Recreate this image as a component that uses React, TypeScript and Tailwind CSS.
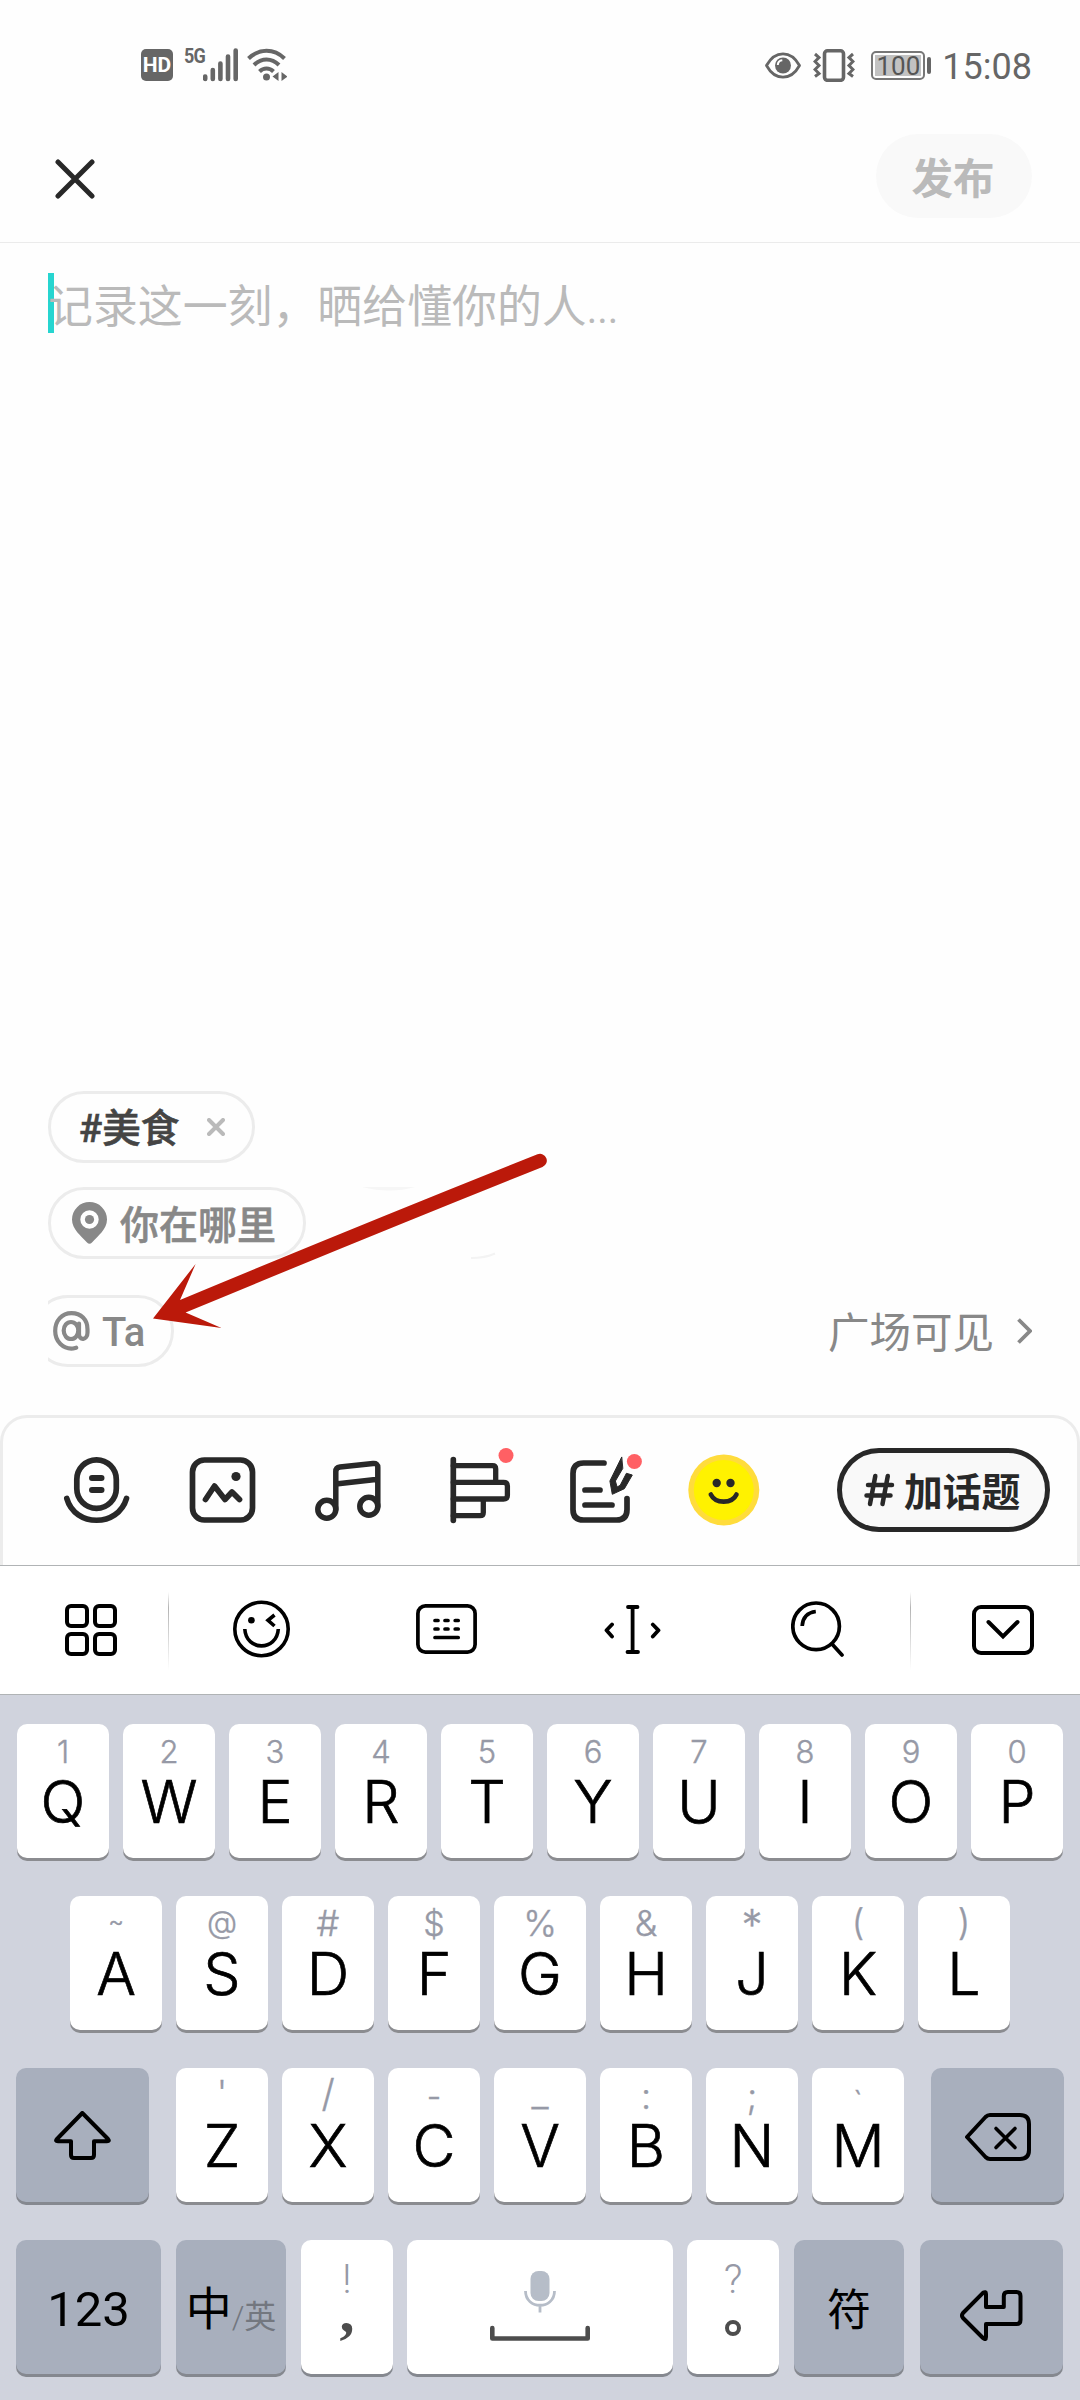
import type { ReactNode } from 'react'

const sans = "font-['Noto_Sans_CJK_SC',sans-serif]"
const roboto = "font-['Roboto','Noto_Sans_CJK_SC',sans-serif]"
const keyFont = "font-['Inter','Liberation_Sans',sans-serif]"

type KeyDef = { main: string; hint: string; hintClass?: string }

const digitRow: KeyDef[] = 'QWERTYUIOP'.split('').map((main, i) => ({
  main,
  hint: String((i + 1) % 10),
}))

const homeRow: KeyDef[] = [
  { main: 'A', hint: '~', hintClass: 'text-[24px] pt-[14px]' },
  { main: 'S', hint: '@', hintClass: 'text-[31px] pt-[10px]' },
  { main: 'D', hint: '#', hintClass: 'text-[36px] pt-[9px]' },
  { main: 'F', hint: '$', hintClass: 'text-[34px] pt-[11px]' },
  { main: 'G', hint: '%', hintClass: 'text-[36px] pt-[9px]' },
  { main: 'H', hint: '&', hintClass: 'text-[36px] pt-[9px]' },
  { main: 'J', hint: '*', hintClass: 'text-[42px] pt-[8px]' },
  { main: 'K', hint: '(', hintClass: 'text-[36px] pt-[8px]' },
  { main: 'L', hint: ')', hintClass: 'text-[36px] pt-[8px]' },
]

const bottomRow: KeyDef[] = [
  { main: 'Z', hint: "'", hintClass: 'text-[34px] pt-[8px]' },
  { main: 'X', hint: '/', hintClass: 'text-[38px] pt-[6px]' },
  { main: 'C', hint: '-', hintClass: 'text-[32px] pt-[13px]' },
  { main: 'V', hint: '_', hintClass: 'text-[38px] pt-[6px]' },
  { main: 'B', hint: ':', hintClass: 'text-[36px] pt-[10px]' },
  { main: 'N', hint: ';', hintClass: 'text-[36px] pt-[10px]' },
  { main: 'M', hint: '`', hintClass: 'text-[30px] pt-[19px]' },
]

function LetterKey({ main, hint, hintClass = 'text-[31px] pt-[12px]' }: KeyDef) {
  return (
    <div
      className={`flex h-[134px] w-[92px] shrink-0 flex-col items-center rounded-[10px] bg-white shadow-[0_3px_0_#8b8c90] ${keyFont}`}
    >
      <span
        className={`h-[48px] leading-none font-light whitespace-pre text-[#9699a6] [-webkit-text-stroke:.4px_#9699a6] ${hintClass}`}
      >
        {hint}
      </span>
      <span className="text-[59px] leading-none font-light text-black [-webkit-text-stroke:.7px_#000]">{main}</span>
    </div>
  )
}

function WideKey({ className, children }: { className: string; children: ReactNode }) {
  return (
    <div className={`flex h-[134px] shrink-0 justify-center rounded-[10px] shadow-[0_3px_0_#85888f] ${className}`}>
      {children}
    </div>
  )
}

function StatusBar() {
  return (
    <div className="flex h-[116px] items-start pt-[48px] pr-[48px] pl-[141px] text-[#666]">
      <div className="mt-[1px] flex h-8 w-8 items-center justify-center rounded-[5px] bg-[#666] pt-[2px] font-['Roboto',sans-serif] text-[21px] font-bold text-white">
        HD
      </div>
      <span className="ml-[10px] w-[20px] scale-x-90 font-['Roboto',sans-serif] text-[20px] leading-[16px] font-bold tracking-[-1px]">
        5G
      </span>
      <svg className="h-[34px] w-[35px]" viewBox="0 0 35 34" stroke="currentColor" strokeWidth="4.6" strokeLinecap="round">
        <path d="M2.2 28.5v2.5M9.8 22v9M17.4 15.5V31M25 8.500V31M32.700 2.500V31" />
      </svg>
      <svg className="ml-[9px] h-[34px] w-[40px]" viewBox="0 0 40 34" fill="none" stroke="currentColor" strokeWidth="4">
        <path d="M1.500 10.500C12 .200 27 .200 37.500 10.500" />
        <path d="M7 17C14.500 9.500 24.500 9.500 32 17" />
        <path d="M12.500 23.500C16.500 19.500 22.500 19.500 26.500 23.500" />
        <circle cx="19.500" cy="29" r="3.500" fill="currentColor" stroke="none" />
        <path d="M31.500 24v9l-6-4.500zM34.500 24v9l6-4.500z" fill="currentColor" stroke="none" />
      </svg>

      <svg className="mt-[4px] ml-auto h-[27px] w-[36px]" viewBox="0 0 36 27" fill="none" stroke="currentColor">
        <path d="M1.500 13.500C10-2 26-2 34.500 13.500C26 29 10 29 1.500 13.500Z" strokeWidth="2.800" strokeLinejoin="round" />
        <circle cx="18" cy="13.500" r="8" fill="currentColor" stroke="none" />
        <path d="M12.800 13a5 5 0 0 1 4.500-4.700" stroke="#fff" strokeWidth="2" />
      </svg>
      <svg className="mt-[1px] ml-[12px] h-[33px] w-[42px]" viewBox="0 0 42 33" fill="none" stroke="currentColor">
        <rect x="11.500" y="1.800" width="19" height="29.500" rx="3" strokeWidth="3.600" />
        <path d="M2 5l4 3.500-4 4 4 4-4 4 4 4-4 3M40 5l-4 3.500 4 4-4 4 4 4-4 4 4 3" strokeWidth="3" />
      </svg>
      <div className="mt-[3px] ml-[16px] flex h-[29px] w-[54px] items-center justify-center rounded-[5px] border-2 border-[#777] p-[2px]">
        <span className="flex h-full w-full items-center justify-center bg-[#c2c2c2] font-['Roboto',sans-serif] text-[26px] leading-none text-[#555]">
          100
        </span>
      </div>
      <span className="mt-[9px] ml-[2px] h-[17px] w-[4px] rounded-full bg-[#666]" />
      <span className="mt-[1px] ml-[11px] font-['Roboto',sans-serif] text-[36px] leading-[36px]">15:08</span>
    </div>
  )
}

function TitleBar() {
  return (
    <header className="flex h-[127px] items-start justify-between border-b border-[#ebebeb] pt-[18px] pr-[48px] pl-[55px]">
      <svg className="mt-[25px] h-10 w-10" viewBox="0 0 40 40" stroke="#282828" strokeWidth="5" strokeLinecap="round">
        <path d="M3 3l34 34M37 3L3 37" />
      </svg>
      <button
        type="button"
        className={`h-[84px] w-[156px] rounded-full bg-[#f9f9f9] pr-[2px] text-[41.500px] leading-[82px] font-bold text-[#bababa] ${sans}`}
      >
        发布
      </button>
    </header>
  )
}

function Chips() {
  return (
    <div className="relative h-[324px] pl-[48px]">
      <div className="flex h-[72px] w-[207px] items-center rounded-full border-[3px] border-[#ececec] pl-[28px]">
        <span className={`pt-[4px] text-[38.500px] leading-none font-medium text-[#444] [-webkit-text-stroke:.6px_#444] ${roboto}`}>
          #美食
        </span>
        <svg className="ml-auto mr-[27px] h-[18px] w-[18px]" viewBox="0 0 18 18" stroke="#bababa" strokeWidth="4" strokeLinecap="round">
          <path d="M2 2l14 14M16 2L2 16" />
        </svg>
      </div>
      <div className="mt-[24px] flex h-[72px] w-[258px] items-center rounded-full border-[3px] border-[#ececec] pl-[21px] text-[#888]">
        <svg className="h-[42px] w-[35px]" viewBox="0 0 35 42" fill="currentColor">
          <path
            fillRule="evenodd"
            d="M17.500 0A17.500 17.500 0 0 1 35 17.500C35 27 26 34 20 40.500Q17.500 43 15 40.500C9 34 0 27 0 17.500A17.500 17.500 0 0 1 17.500 0ZM17.500 8.300a9.200 9.200 0 1 0 0 18.400a9.200 9.200 0 0 0 0-18.400Z"
          />
          <circle cx="17.500" cy="17.500" r="4.600" />
        </svg>
        <span className={`ml-[13px] pb-[2px] text-[39px] leading-none font-medium [-webkit-text-stroke:.6px_#888] ${sans}`}>
          你在哪里
        </span>
      </div>
      <div className="mt-[36px] flex items-center justify-between pr-[48px] text-[#888]">
        {/* the chip is scrolled a little past the left edge of its strip */}
        <div className="w-[126px] overflow-hidden">
          <div className="-ml-[16px] flex h-[72px] w-[142px] items-center rounded-full border-[3px] border-[#ececec] pl-[18px]">
            <svg className="h-[40px] w-[37px]" viewBox="0 0 37 40" fill="none" stroke="currentColor" strokeWidth="4.200" strokeLinecap="round">
              <ellipse cx="18" cy="19.500" rx="7.300" ry="8.500" />
              <path d="M26 12.500V23c0 7 8.500 6.500 8.500-1.500v-3C34.500 8.500 28 2.200 18.500 2.200C9 2.200 2.200 9.500 2.200 20c0 10.500 8 18.500 18 17.500l3-.8" />
            </svg>
            <span className="ml-[12px] pt-[3px] font-['Roboto',sans-serif] text-[40px] leading-none font-medium">Ta</span>
          </div>
        </div>
        <div className="flex items-center">
          <span className={`text-[41.500px] leading-none ${sans}`}>广场可见</span>
          <svg className="ml-[23px] h-[26px] w-[15px]" viewBox="0 0 15 26" fill="none" stroke="currentColor" strokeWidth="3.800">
            <path d="M1.500 1.500L13 13L1.500 24.500" />
          </svg>
        </div>
      </div>

      {/* annotation arrow pointing at the mention chip */}
      <svg className="absolute top-0 left-0 h-[324px] w-[600px]" viewBox="0 1091 600 324">
        <path d="M362 1187H415Q390 1194 362 1187Z" fill="#f6f6f6" />
        <path d="M471 1258Q485 1258 495 1253.500" fill="none" stroke="#f3f3f3" strokeWidth="2" />
        <path
          d="M153 1318.500L195.600 1264L180 1300Q365 1223 537.500 1154.300A6.600 6.600 0 0 1 542.500 1167Q370 1236 185.600 1312.500L221.500 1328Z"
          fill="#bb190a"
        />
      </svg>
    </div>
  )
}

function ToolIcon({ children }: { children: ReactNode }) {
  return (
    <svg
      className="h-[66px] w-[66px] overflow-visible"
      viewBox="0 0 66 66"
      fill="none"
      stroke="#282828"
      strokeWidth="5.700"
      strokeLinecap="round"
      strokeLinejoin="round"
    >
      {children}
    </svg>
  )
}

function AttachBar() {
  return (
    <div className="flex h-[150px] items-start rounded-t-[27px] border-x-[3px] border-t-[3px] border-[#ececec] pr-[27px] pl-[61px]">
      <div className="mt-[39px] flex gap-[59.500px]">
        <ToolIcon>
          <rect x="12.800" y="2.800" width="39.500" height="48.500" rx="19.700" />
          <path d="M2.800 41.500C11 70.500 54 70.500 62.500 41.500" />
          <path d="M28 21h9.500M28 33h9.500" strokeWidth="6" />
        </ToolIcon>
        <ToolIcon>
          <rect x="2.500" y="3" width="60" height="60" rx="12" />
          <path d="M15.500 42.500L24.500 29L35 42.500L42 35L49.500 42.500" />
          <circle cx="46" cy="19.500" r="4.600" fill="#282828" stroke="none" />
        </ToolIcon>
        <ToolIcon>
          <g strokeWidth="5.500">
            <circle cx="11.800" cy="52.300" r="9" />
            <circle cx="53.800" cy="49.300" r="9" />
            <path d="M20.800 52.300V14.500Q20.800 10.500 25 10L58 6.500Q62.800 6 62.800 10.500V49.300M20.800 27L62.800 22.300" />
          </g>
        </ToolIcon>
        <ToolIcon>
          <path d="M12.300 2.700V63.300" />
          <path
            d="M12.300 8.700H51.500Q54.700 8.700 54.700 12V25.300M12.300 25.300H62.500Q66.400 25.300 66.400 29V38.500Q66.400 42 62.500 42H12.300M42.300 42V55.500Q42.300 58.700 39 58.700H12.300"
            strokeWidth="5.300"
          />
          <circle cx="65" cy="-1.500" r="7.500" fill="#ff6064" stroke="none" />
        </ToolIcon>
        <ToolIcon>
          <path d="M38 6H17.500Q7 6 7 16.500V52.500Q7 63 17.500 63H50.500Q61 63 61 52.500V41.500M19 33H34M19 48H46" />
          <path
            d="M55.600 .300L43.900 24L46.300 37.300L58.400 31.700L66.300 18L60.400 16.300L54.200 28.300L51.100 30L49.400 24L56.600 11.700Z"
            fill="#282828"
            stroke="#282828"
            strokeWidth="1"
          />
          <circle cx="68.400" cy="4.500" r="7.500" fill="#ff6064" stroke="none" />
        </ToolIcon>
        <ToolIcon>
          <circle cx="31.800" cy="33" r="35.500" fill="#ffdc3c" stroke="none" />
          <circle cx="31.800" cy="33" r="30" fill="#fff200" stroke="none" />
          <circle cx="24.700" cy="26" r="4.200" fill="#282828" stroke="none" />
          <circle cx="38.500" cy="26" r="4.200" fill="#282828" stroke="none" />
          <path d="M18.800 37.500C23.500 47 40 47 44.500 37.500" strokeWidth="4.600" />
        </ToolIcon>
      </div>
      <button
        type="button"
        className="mt-[30px] ml-auto flex h-[84px] w-[213px] items-center rounded-full border-[5px] border-[#282828] bg-[#f9f9f9] pl-[22px] text-[#282828]"
      >
        <svg className="h-[36px] w-[31px]" viewBox="0 0 31 36" stroke="currentColor" strokeWidth="4.500" strokeLinecap="round">
          <path d="M4 13h24M2.500 23.500h24M11.300 4L6 32M23.800 4L18.500 32" />
        </svg>
        <span className={`ml-[9px] pb-[2px] text-[38.800px] leading-none font-bold ${sans}`}>加话题</span>
      </button>
    </div>
  )
}

function KeyboardToolbar() {
  const divider =
    'mt-[26px] h-[78px] w-px bg-gradient-to-b from-transparent via-[#b4b4b4] via-20% to-transparent'
  return (
    <div className="flex h-[130px] border-y border-[#b0b3b5] bg-white">
      <div className="flex w-[168px] items-center justify-center pl-[14px]">
        <svg className="h-[52px] w-[52px]" viewBox="0 0 52 52" fill="none" stroke="#000" strokeWidth="4">
          <rect x="2" y="2" width="20" height="20" rx="4" />
          <rect x="30" y="2" width="20" height="20" rx="4" />
          <rect x="2" y="30" width="20" height="20" rx="4" />
          <rect x="30" y="30" width="20" height="20" rx="4" />
        </svg>
      </div>
      <div className={divider} />
      <div className="grid flex-1 grid-cols-4 items-center justify-items-center pb-[2px]">
        <svg className="h-[58px] w-[57px]" viewBox="0 0 57 58" fill="none" stroke="#000" strokeWidth="3.600">
          <circle cx="28.500" cy="29" r="26.700" />
          <circle cx="18.400" cy="20.300" r="3.300" fill="#000" stroke="none" />
          <path d="M41.500 15L35 20.300L41.500 26" />
          <path d="M11.800 29C13 51.500 44 51.500 45.300 29" />
        </svg>
        <svg className="h-[50px] w-[61px]" viewBox="0 0 61 50" fill="none" stroke="#000" strokeWidth="3.700">
          <rect x="1.900" y="1.900" width="57.200" height="46.200" rx="7.500" />
          <path
            d="M19 16.500h3M29 16.500h3M39.200 16.500h3M19 25h3M29 25h3M39.200 25h3M19 33.500h23.200"
            strokeLinecap="round"
          />
        </svg>
        <svg
          className="h-[49px] w-[57px]"
          viewBox="0 0 57 49"
          fill="none"
          stroke="#000"
          strokeWidth="3.800"
          strokeLinecap="round"
          strokeLinejoin="round"
        >
          <path d="M28.600 2V47M24 2h9.500M23.500 47h10.500M8 19.500L2.500 25.300L8 31.500M48.800 19.500L54.500 25.300L48.800 31.500" />
        </svg>
        <svg className="h-[56px] w-[53px]" viewBox="0 0 53 56" fill="none" stroke="#000" strokeWidth="3.700">
          <circle cx="25.100" cy="25.300" r="23.300" />
          <path d="M11.200 25Q12 12 24.800 10.500" />
          <path d="M41 43L51 54" strokeLinecap="round" />
        </svg>
      </div>
      <div className={divider} />
      <div className="flex w-[169px] items-center justify-center pl-[14px]">
        <svg className="h-[50px] w-[62px]" viewBox="0 0 62 50" fill="none" stroke="#000" strokeWidth="4">
          <rect x="2" y="2" width="58" height="46" rx="7" />
          <path d="M16.500 17L31 31.500L45.500 17" strokeLinecap="round" />
        </svg>
      </div>
    </div>
  )
}

function Keyboard() {
  return (
    <div className="flex h-[705px] flex-col gap-[38px] bg-[#d0d3dd] pt-[29px] pl-[16px]">
      <div className="flex gap-[14px] pl-px">
        {digitRow.map((key) => (
          <LetterKey key={key.main} {...key} />
        ))}
      </div>
      <div className="flex gap-[14px] pl-[54px]">
        {homeRow.map((key) => (
          <LetterKey key={key.main} {...key} />
        ))}
      </div>
      <div className="flex gap-[27px]">
        <WideKey className="w-[133px] items-center bg-[#a8afbd]">
          <svg className="h-[49px] w-[57px]" viewBox="0 0 57 49" fill="none" stroke="#000" strokeWidth="4" strokeLinejoin="round">
            <path d="M28.300 2L54 28Q56 30.300 53 30.300H40V44Q40 47 37 47H20Q17 47 17 44V30.300H4Q.800 30.300 3 28Z" />
          </svg>
        </WideKey>
        <div className="flex gap-[14px]">
          {bottomRow.map((key) => (
            <LetterKey key={key.main} {...key} />
          ))}
        </div>
        <WideKey className="w-[133px] items-center bg-[#a8afbd] pt-[4px]">
          <svg className="h-[48px] w-[66px]" viewBox="0 0 66 48" fill="none" stroke="#000" strokeWidth="4" strokeLinejoin="round">
            <path d="M2 24L20.500 4Q22.500 2 25 2H55Q64 2 64 11V37Q64 46 55 46H25Q22.500 46 20.500 44Z" />
            <path d="M31 15.500L50 34.500M50 15.500L31 34.500" strokeWidth="3.600" strokeLinecap="round" />
          </svg>
        </WideKey>
      </div>
      <div className="flex">
        <WideKey className="w-[145px] items-center bg-[#a8afbd]">
          <span className="pt-[4px] font-['Roboto',sans-serif] text-[49px] leading-none text-black">123</span>
        </WideKey>
        <WideKey className="ml-[15px] w-[110px] bg-[#a8afbd]">
          <div className={`flex items-start pt-[42px] ${sans}`}>
            <span className="text-[46px] leading-[46px] text-black">中</span>
            <span className="pt-[16px] text-[32px] leading-[32px] text-[#73777f]">
              <span className="font-['Roboto',sans-serif] font-light">/</span>英
            </span>
          </div>
        </WideKey>
        <WideKey className="ml-[15px] w-[92px] flex-col items-center justify-start bg-white pt-[19px]">
          <span className="font-['Roboto',sans-serif] text-[41px] leading-[40px] font-light text-[#9699a6]">!</span>
          <span className="font-['Liberation_Serif',serif] text-[60px] leading-[26px] font-bold text-[#4d4d4d]">,</span>
        </WideKey>
        <WideKey className="ml-[14px] w-[266px] bg-white pt-[31px]">
          <svg className="h-[70px] w-[100px]" viewBox="0 0 100 70" fill="none">
            <rect x="40.500" y="0" width="19" height="30" rx="8" fill="#b6bdc8" />
            <path d="M35.500 20C35.500 39 64.500 39 64.500 20M50 34V41.500" stroke="#b6bdc8" strokeWidth="2.800" />
            <path d="M2.300 57V67.500H97.700V57" stroke="#4d4d4d" strokeWidth="4.600" strokeLinecap="round" strokeLinejoin="round" />
          </svg>
        </WideKey>
        <WideKey className="ml-[14px] w-[92px] flex-col items-center justify-start bg-white pt-[19px]">
          <span className="font-['Roboto',sans-serif] text-[41px] leading-[40px] font-light text-[#9699a6]">?</span>
          <span className="mt-[21px] h-4 w-4 rounded-full border-4 border-[#4d4d4d]" />
        </WideKey>
        <WideKey className="ml-[15px] w-[110px] items-center bg-[#a8afbd]">
          <span className={`text-[44px] leading-none text-black ${sans}`}>符</span>
        </WideKey>
        <WideKey className="ml-[16px] w-[143px] items-center bg-[#a8afbd] pt-[16px]">
          <svg className="h-[51px] w-[63px]" viewBox="0 0 63 51" fill="none" stroke="#000" strokeWidth="4" strokeLinejoin="round">
            <path d="M3 23L23 2.800Q26 1 26 4V17H43.800V6Q43.800 2 47.800 2H56.500Q60.500 2 60.500 6V30Q60.500 34 56.500 34H26V47Q26 50.500 23 48L3 28Q1 25.500 3 23Z" />
          </svg>
        </WideKey>
      </div>
    </div>
  )
}

export default function App() {
  return (
    <div className="flex h-[2400px] w-[1080px] flex-col overflow-hidden bg-[#fefefe]">
      <StatusBar />
      <TitleBar />
      <main className="flex h-[848px] items-start pt-[30px] pl-[48px]">
        <span className="h-[60px] w-[6px] bg-[#27d5d0]" />
        <p className={`-ml-[6px] text-[44.900px] leading-[62px] whitespace-nowrap text-[#bababa] ${sans}`}>
          记录这一刻，晒给懂你的人<span className="font-['Roboto',sans-serif] text-[40px]">...</span>
        </p>
      </main>
      <Chips />
      <AttachBar />
      <KeyboardToolbar />
      <Keyboard />
    </div>
  )
}
